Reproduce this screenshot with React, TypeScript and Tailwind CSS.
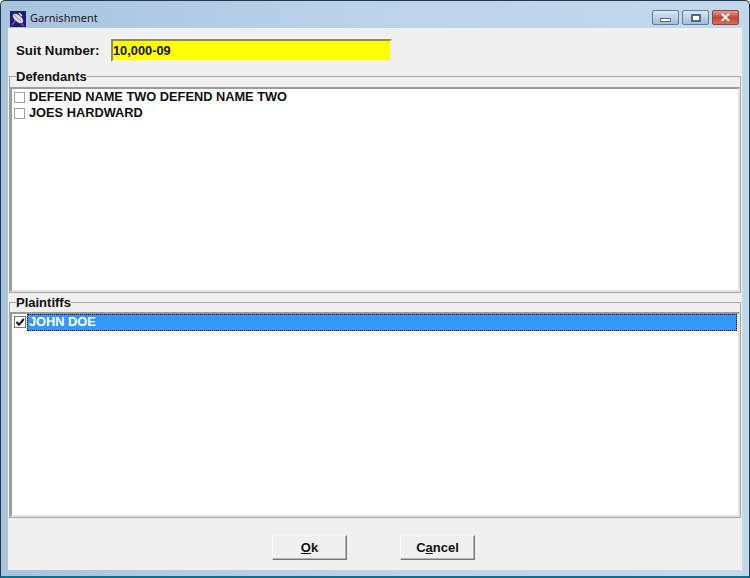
import React from "react";

const font = { fontFamily: '"Liberation Sans", Arial, sans-serif' };

function Check({ checked }: { checked?: boolean }) {
  return (
    <span
      className={
        checked
          ? "flex h-[12px] w-[12px] shrink-0 items-center justify-center border border-[#777] bg-white"
          : "flex h-[11px] w-[11px] shrink-0 border border-[#a0a0a0] bg-white"
      }
    >
      {checked && (
        <svg width="10" height="10" viewBox="0 0 10 10">
          <path d="M1.5 5 L4 7.8 L8.8 2" fill="none" stroke="#111" strokeWidth="2" />
        </svg>
      )}
    </span>
  );
}

function Row({ text, checked, selected }: { text: string; checked?: boolean; selected?: boolean }) {
  return (
    <div className="flex h-4 items-center">
      <span className="flex w-[15px] shrink-0 justify-start pl-[2px]">
        <Check checked={checked} />
      </span>
      <span
        className={
          selected
            ? "flex h-[17px] flex-1 items-center border border-dotted border-black bg-[#3399ff] pl-[1px] text-[12.8px] font-bold text-white"
            : "pl-[2px] text-[12.8px] font-bold text-[#111]"
        }
      >
        {text}
      </span>
    </div>
  );
}

function Group({ title, body, children }: { title: string; body: string; children: React.ReactNode }) {
  return (
    <fieldset className="mx-[1px] min-w-0 border border-[#a6a6a6] p-0">
      <legend className="ml-[6px] h-[12px] px-0 text-[13px] leading-[13px] font-bold text-[#111]">{title}</legend>
      <div className={`h-[205px] border-2 border-[#9b9b9b] border-r-[#e2e2e2] border-b-[#e2e2e2] bg-white pr-[1px] ${body}`}>
        {children}
      </div>
    </fieldset>
  );
}

function Btn({ children }: { children: React.ReactNode }) {
  return (
    <button className="h-[25px] w-[75px] border border-[#f8f8f8] border-r-[#777] border-b-[#777] bg-[#f0f0f0] text-[13px] font-bold text-[#111] shadow-[inset_-1px_-1px_0_#b5b5b5]">
      {children}
    </button>
  );
}

function WinBtn({ className, children }: { className: string; children: React.ReactNode }) {
  return (
    <span className={`flex h-[15px] w-[27px] items-center justify-center rounded-[2px] border ${className}`}>{children}</span>
  );
}

export default function App() {
  return (
    <div
      style={font}
      className="flex h-[578px] w-[750px] flex-col overflow-hidden rounded-t-[5px] border border-[#1f3a4d] border-b-2 border-b-[#0f6f86] bg-gradient-to-r from-[#a9c3de] via-[#bdd3ea] to-[#c4d8ec]"
    >
      <div className="flex h-[27px] shrink-0 items-center pl-[9px] pr-[10px] pt-[8px]">
        <svg width="16" height="16" viewBox="0 0 16 16" className="shrink-0">
          <rect width="16" height="16" fill="#1c1a7c" />
          <path d="M2 14 L6 9 M14 15 L9 11" stroke="#a83aa8" strokeWidth="1.4" />
          <ellipse cx="8" cy="7.5" rx="6.5" ry="3.6" transform="rotate(40 8 7.5)" fill="#d9d9e2" stroke="#2a2a3a" strokeWidth="0.7" />
          <path d="M4 4 L11 10" stroke="#8f8fa0" strokeWidth="1" />
          <path d="M9 2 L12 5" stroke="#f4f4ff" strokeWidth="1.2" />
        </svg>
        <span className="ml-[4px] text-[11px] text-[#1a1a1a]" style={{ fontFamily: '"Noto Sans", sans-serif' }}>
          Garnishment
        </span>
        <div className="ml-auto flex gap-[3px] pb-[2px]">
          <WinBtn className="border-[#5f7f9f] bg-gradient-to-b from-[#dbe7f3] to-[#a3bdd6]">
            <span className="mt-[4px] h-[4px] w-[11px] border border-[#54697f] bg-white" />
          </WinBtn>
          <WinBtn className="border-[#5f7f9f] bg-gradient-to-b from-[#dbe7f3] to-[#a3bdd6]">
            <span className="h-[8px] w-[10px] border-2 border-[#54697f] bg-white" />
          </WinBtn>
          <WinBtn className="border-[#8c4a3e] bg-gradient-to-b from-[#e89a8c] via-[#c8432f] to-[#d0705f]">
            <span className="text-[13px] leading-none font-bold text-white">✕</span>
          </WinBtn>
        </div>
      </div>
      <div className="mx-[7px] mb-[6px] flex min-h-0 flex-1 flex-col bg-[#f0f0f0]">
        <div className="flex h-[42px] shrink-0 items-start pl-[8px] pt-[11px]">
          <span className="w-[95px] pt-[4px] text-[13.3px] leading-[15px] font-bold text-[#111]">Suit Number:</span>
          <div className="flex h-[23px] w-[281px] items-center border-2 border-[#8a8a6a] border-r-[#f0f0e0] border-b-[#f0f0e0] bg-[#ffff00] text-[12.8px] font-bold text-[#111]">
            10,000-09
          </div>
        </div>
        <Group title="Defendants" body="mt-[5px]">
          <Row text="DEFEND NAME TWO DEFEND NAME TWO" />
          <Row text="JOES HARDWARD" />
        </Group>
        <div className="h-[3px] shrink-0" />
        <Group title="Plaintiffs" body="mt-[4px]">
          <Row text="JOHN DOE" checked selected />
        </Group>
        <div className="flex flex-1 items-start gap-[53px] pl-[264px] pt-[17px]">
          <Btn>
            <u>O</u>k
          </Btn>
          <Btn>
            C<u>a</u>ncel
          </Btn>
        </div>
      </div>
    </div>
  );
}
